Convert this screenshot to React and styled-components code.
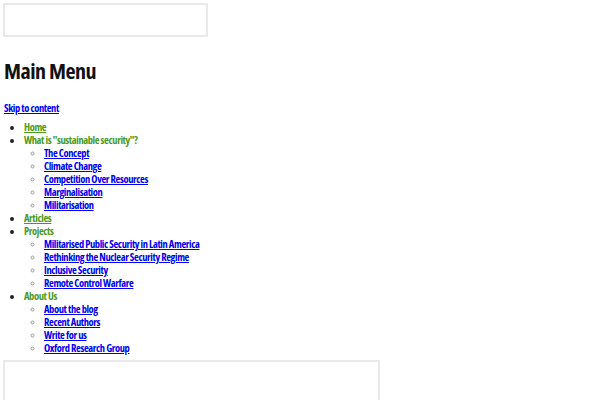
import React from "react";
import styled, { createGlobalStyle } from "styled-components";

const Global = createGlobalStyle`
  html, body { margin: 0; padding: 0; background: #fff; }
  body {
    padding: 3px;
    font-family: "Open Sans", "Roboto", sans-serif;
    font-stretch: 75%;
    font-weight: 700;
  }
`;

const Page = styled.div`
  display: flex;
  flex-direction: column;
`;

const Box = styled.div`
  width: ${(p) => p.$w}px;
  height: ${(p) => p.$h}px;
  border: 2px solid #e9e9e9;
  box-sizing: border-box;
`;

const Title = styled.h1`
  margin: 18px 0 0 1px;
  font-size: 22px;
  line-height: 30px;
  letter-spacing: -0.5px;
  color: #111;
`;

const Skip = styled.a`
  display: block;
  margin: 17px 0 0 1px;
  font-size: 10.5px;
  line-height: 13px;
  letter-spacing: -0.4px;
  color: #0000ee;
`;

const List = styled.ul`
  margin: ${(p) => (p.$nested ? "0" : "6px 0 0 1px")};
  padding-left: 20px;
  list-style: ${(p) => (p.$nested ? "circle" : "disc")};
  font-size: 10.5px;
  line-height: 13px;
  letter-spacing: -0.4px;
`;

const Item = styled.li`
  color: ${(p) => (p.$top ? "#4b9a1e" : "#0000ee")};
  &::marker {
    color: ${(p) => (p.$top ? "#222" : "#999")};
    font-size: ${(p) => (p.$top ? "10px" : "8px")};
  }
`;

const Link = styled.a`
  color: inherit;
  text-decoration: ${(p) => (p.$plain ? "none" : "underline")};
`;

const menu = [
  { label: "Home", link: true },
  {
    label: 'What is "sustainable security"?',
    children: [
      "The Concept",
      "Climate Change",
      "Competition Over Resources",
      "Marginalisation",
      "Militarisation",
    ],
  },
  { label: "Articles", link: true },
  {
    label: "Projects",
    children: [
      "Militarised Public Security in Latin America",
      "Rethinking the Nuclear Security Regime",
      "Inclusive Security",
      "Remote Control Warfare",
    ],
  },
  {
    label: "About Us",
    children: ["About the blog", "Recent Authors", "Write for us", "Oxford Research Group"],
  },
];

const Spacer = styled.div`
  height: ${(p) => p.$h}px;
`;

export default function App() {
  return (
    <Page>
      <Global />
      <Box $w={205} $h={34} />
      <Title>Main Menu</Title>
      <Skip href="#">Skip to content</Skip>
      <List>
        {menu.map((m) => (
          <Item key={m.label} $top>
            <Link href="#" $plain={!m.link}>{m.label}</Link>
            {m.children && (
              <List $nested>
                {m.children.map((c) => (
                  <Item key={c}>
                    <Link href="#">{c}</Link>
                  </Item>
                ))}
              </List>
            )}
          </Item>
        ))}
      </List>
      <Spacer $h={5} />
      <Box $w={377} $h={60} />
    </Page>
  );
}
